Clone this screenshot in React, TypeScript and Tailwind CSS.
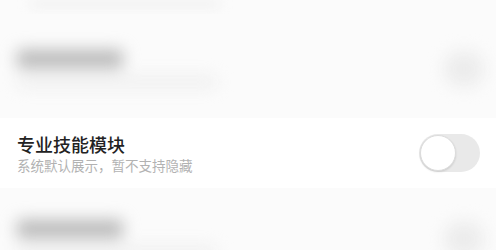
const font = { fontFamily: '"Noto Sans CJK SC", "Noto Sans", sans-serif' };

function BlurredRow({ className = "" }: { className?: string }) {
  return (
    <div className={`relative bg-[#fbfbfb] overflow-hidden ${className}`}>
      <div className="blur-[8px]">
        <div className="flex items-center justify-between pl-[17px] pr-[12px]">
          <div className="flex flex-col gap-[9px]">
            <div className="h-[18px] w-[106px] rounded-[4px] bg-[#b8b8b8]" />
            <div className="h-[10px] w-[200px] rounded-[4px] bg-[#ededed]" />
          </div>
          <div className="h-[36px] w-[40px] rounded-full bg-[#ececec]" />
        </div>
      </div>
    </div>
  );
}

export default function App() {
  return (
    <div className="w-[496px] h-[250px] overflow-hidden bg-[#fbfbfb] flex flex-col" style={font}>
      {/* top blurred area */}
      <div className="h-[118px] flex flex-col">
        <div className="h-[14px] blur-[6px] px-[30px] pt-[1px]">
          <div className="h-[6px] w-[190px] rounded bg-[#eeeeee]" />
        </div>
        <BlurredRow className="pt-[36px] h-[104px]" />
      </div>

      {/* focused row */}
      <div className="h-[70px] bg-white flex items-center justify-between pl-[17px] pr-[16px]">
        <div className="flex flex-col gap-[1px]">
          <span className="block text-[18px] leading-[22px] font-medium text-[#222222]">专业技能模块</span>
          <span className="block text-[13.5px] leading-[18px] text-[#b2b2b2]">系统默认展示，暂不支持隐藏</span>
        </div>
        <div className="w-[61px] h-[38px] rounded-full bg-[#e9e9e9] p-[1px] flex items-center">
          <div className="w-[36px] h-[36px] rounded-full bg-white border border-[#dcdcdc] shadow-[0_1px_2px_rgba(0,0,0,0.12)]" />
        </div>
      </div>

      {/* bottom blurred area */}
      <BlurredRow className="pt-[32px] flex-1" />
    </div>
  );
}
